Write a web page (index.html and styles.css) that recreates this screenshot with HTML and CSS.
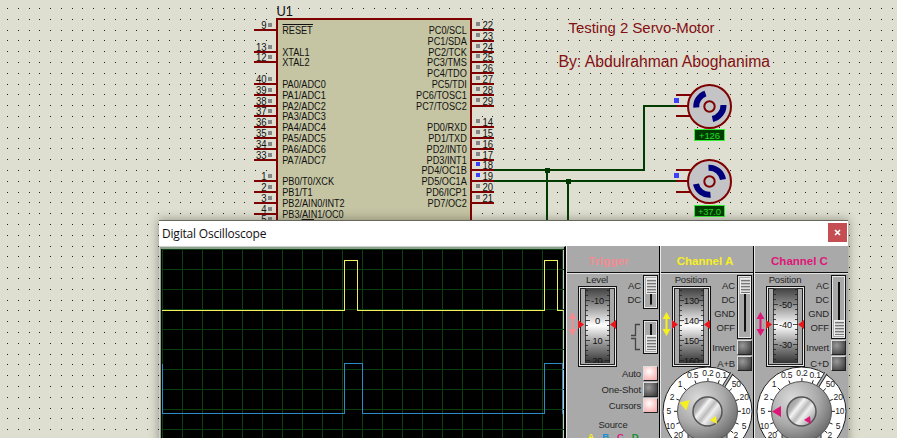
FILE: index.html
```html
<!DOCTYPE html>
<html lang="en">
<head>
<meta charset="utf-8">
<title>Testing 2 Servo-Motor</title>
<link rel="stylesheet" href="styles.css">
</head>
<body>
<main class="workspace">
  <svg class="schematic" width="897" height="438" viewBox="0 0 897 438">
    <path id="dots" class="dots"/>
    <rect class="chip" x="277" y="19" width="194" height="230"/>
    <text class="ref" x="276.500" y="16" textLength="16.500" lengthAdjust="spacingAndGlyphs">U1</text>
    <g id="pins"></g>
    <path class="overline" d="M282.500 24.500H313M301.500 219.500H314"/>
    <path class="wire" d="M494 170H644V106H676M494 181H676M547 170V240M568 181V240"/>
    <path class="joint" d="M545 168h5v5h-5zM566 179h5v5h-5z"/>
    <text class="note" x="568.500" y="33" textLength="146" lengthAdjust="spacingAndGlyphs">Testing 2 Servo-Motor</text>
    <text class="note big" x="558.500" y="67" textLength="211.500" lengthAdjust="spacingAndGlyphs">By: Abdulrahman Aboghanima</text>
    <g transform="translate(709.500 106.500)">
      <path class="lead" d="M-34-11.500h18M-34-.5h18M-34 9.500h18"/>
      <rect class="hi" x="-35.500" y="-8.500" width="5" height="5"/>
      <circle class="hub" r="21.500"/>
      <path class="blade" d="M-13.200 1A13.500 13.500 0 0 1-4-13M14-1.500A14 14 0 0 1 3 12.500"/>
      <circle class="hub" r="5.200"/>
      <rect class="tag" x="-15" y="23" width="30" height="11"/>
      <text class="tagtext" x="0" y="32" textLength="21">+126</text>
    </g>
    <g transform="translate(709.500 181.500)">
      <path class="lead" d="M-34-11.500h18M-34-.5h18M-34 10.500h18"/>
      <rect class="hi" x="-35.500" y="-8.500" width="5" height="5"/>
      <circle class="hub" r="21.500"/>
      <path class="blade" d="M-1-13.800A14 14 0 0 1 13.500-2M-13.500 2.500A13.500 13.500 0 0 0 1 13.300"/>
      <circle class="hub" r="5.200"/>
      <rect class="tag" x="-15" y="24" width="30" height="11"/>
      <text class="tagtext" x="0" y="33" textLength="23">+37.0</text>
    </g>
  </svg>

  <section class="window">
    <header class="titlebar"><span>Digital Oscilloscope</span><button class="close" aria-label="Close"><svg width="7" height="7" viewBox="0 0 7 7"><path d="M1 1l5 5M6 1L1 6"/></svg></button></header>
    <div class="body">
      <div class="screen">
        <svg width="402" height="190" viewBox="0 0 402 190">
          <defs><pattern id="grid" width="20" height="20" patternUnits="userSpaceOnUse"><path d="M0 .5H20M.5 0V20" stroke="#0b3f10"/></pattern></defs>
          <rect width="402" height="190" fill="url(#grid)"/>
          <path class="trace-b" d="M.5 114.500V164.500H182.500V114.500H200.500V164.500H382.500V114.500H400.500V164.500"/>
          <path class="trace-a" d="M0 61.500H182.500V11.500H195.500V61.500H382.500V11.500H395.500V61.500H401"/>
        </svg>
      </div>
      <section class="panel trigger">
        <h2>Trigger</h2>
        <div class="face">
          <div class="gauge"><span>Level</span><svg data-values="-10,0,10,20" data-first="15" width="52" height="82"></svg></div>
          <div class="options">
            <div class="choice"><ul><li>AC</li><li>DC</li></ul><i class="switch"></i></div>
            <div class="choice slope"><svg width="10" height="28" viewBox="0 0 10 28"><path d="M0 12.500H4.500V1.500H9M0 15.500H4.500V26.500H9"/></svg><i class="switch down"></i></div>
          </div>
        </div>
        <div class="buttons">
          <div class="row">Auto<i class="btn lit"></i></div>
          <div class="row">One-Shot<i class="btn"></i></div>
          <div class="row">Cursors<i class="btn lit"></i></div>
        </div>
        <div class="source">Source</div>
        <div class="sources"><b class="a">A</b><b class="b">B</b><b class="c">C</b><b class="d">D</b></div>
      </section>
      <section class="panel chan-a">
        <h2>Channel A</h2>
        <div class="face">
          <div class="gauge"><span>Position</span><svg data-values="130,140,150,160" data-first="15" width="52" height="82"></svg></div>
          <div class="options">
            <div class="choice long"><ul><li>AC</li><li>DC</li><li>GND</li><li>OFF</li></ul><i class="switch"></i></div>
            <div class="row">Invert<i class="btn"></i></div>
            <div class="row">A+B<i class="btn"></i></div>
          </div>
        </div>
        <svg class="knob" data-angle="18" width="92" height="80" viewBox="0 0 92 80"></svg>
      </section>
      <section class="panel chan-c">
        <h2>Channel C</h2>
        <div class="face">
          <div class="gauge"><span>Position</span><svg data-values="-50,-40,-30" data-first="19" width="52" height="82"></svg></div>
          <div class="options">
            <div class="choice long"><ul><li>AC</li><li>DC</li><li>GND</li><li>OFF</li></ul><i class="switch down"></i></div>
            <div class="row">Invert<i class="btn"></i></div>
            <div class="row">C+D<i class="btn"></i></div>
          </div>
        </div>
        <svg class="knob" data-angle="0" width="92" height="80" viewBox="0 0 92 80"></svg>
      </section>
    </div>
  </section>
</main>
<svg class="defs" width="0" height="0">
  <defs>
    <linearGradient id="drum" x2="0" y2="1"><stop offset="0" stop-color="#404040"/><stop offset=".2" stop-color="#858585"/><stop offset=".5" stop-color="#fff"/><stop offset=".75" stop-color="#929292"/><stop offset="1" stop-color="#333"/></linearGradient>
    <radialGradient id="dialfill" cx=".35" cy=".3" r=".8"><stop offset="0" stop-color="#dcdcdc"/><stop offset=".55" stop-color="#a8a8a8"/><stop offset="1" stop-color="#606060"/></radialGradient>
    <linearGradient id="capfill" x1="0" y1="0" x2="1" y2=".8"><stop offset="0" stop-color="#888"/><stop offset=".3" stop-color="#b4b4b4"/><stop offset=".4" stop-color="#f4f4f4"/><stop offset=".55" stop-color="#bcbcbc"/><stop offset=".66" stop-color="#efefef"/><stop offset="1" stop-color="#909090"/></linearGradient>
  </defs>
</svg>
<script src="app.js"></script>
</body>
</html>
```
FILE: styles.css
```css
* { box-sizing: border-box; }
body { margin: 0; overflow: hidden; font-family: "Liberation Sans", Arial, sans-serif; }
.workspace { position: relative; width: 897px; height: 438px; overflow: hidden; background: #dedfd0; }
.schematic { display: block; }
.defs { position: absolute; }
.dots { fill: #202020; shape-rendering: crispEdges; }
.chip { fill: #c5c4a3; stroke: #7e0000; stroke-width: 2; }
.pin, .lead { stroke: #7e0000; stroke-width: 2; fill: none; shape-rendering: crispEdges; }
.label, .num { font-size: 10px; fill: #101010; }
.ref { font-size: 14.500px; fill: #101010; }
.overline { stroke: #111; stroke-width: 1; }
.lo { fill: #858585; }
.hi { fill: #3c40f8; }
.wire { fill: none; stroke: #003c00; stroke-width: 2; shape-rendering: crispEdges; }
.joint { fill: #003800; }
.note { font-size: 15px; fill: #851014; }
.note.big { font-size: 16px; }
.hub { fill: #c4c4c6; stroke: #7e0000; stroke-width: 2; }
.blade { fill: none; stroke: #00007c; stroke-width: 6; }
.tag { fill: #003c00; stroke: #35ee35; stroke-width: 1; }
.tagtext { font-size: 9.500px; fill: #22e022; text-anchor: middle; }

.window { position: absolute; left: 159px; top: 220px; width: 689px; height: 240px; border-top: 1px solid #68685f; background: #a9a9a9; box-shadow: 0 0 9px 1px rgba(50, 50, 40, .38); }
.titlebar { display: flex; align-items: center; justify-content: space-between; height: 25px; padding: 0 1px 0 3px; background: #fff; font: 12px "Open Sans", "Noto Sans", sans-serif; color: #111; letter-spacing: -.2px; }
.close { display: grid; place-items: center; width: 19px; height: 19px; margin-top: -2px; padding: 0; border: 0; background: #c44e52; }
.close path { stroke: #fff; stroke-width: 1.700; }
.body { display: flex; height: 214px; }
.screen { width: 407px; padding: 2px 0 0 2px; border: 1px solid #cfcfcf; border-right: 2px solid #000; background: #000; box-shadow: inset 1px 2px 0 #8ba18b, inset -1px 0 0 #cbcbc5; }
.screen svg { display: block; }
.screen path { fill: none; shape-rendering: crispEdges; }
.trace-a { stroke: #f2ef5c; }
.trace-b { stroke: #2c8ac4; }

.panel { flex: 0 0 94px; height: 214px; border-left: 1px solid #e9e9e9; border-right: 1px solid #000; background: #a9a9a9; color: #262626; font-size: 9.500px; line-height: 11px; letter-spacing: -.15px; overflow: hidden; }
.chan-c { border-right: 0; }
.trigger { --c: #f38b92; }
.chan-a { --c: #f7f020; }
.chan-c { --c: #de1678; }
.panel h2 { display: flex; align-items: center; justify-content: center; height: 28px; margin: 0 0 0 -1px; padding: 3px 3px 0 0; border-bottom: 1px solid #e2e2e2; box-shadow: inset 0 -1px 0 #111; color: var(--c); font-size: 11.500px; letter-spacing: 0; }
.trigger h2 { padding-right: 8px; letter-spacing: .2px; }
.face { display: flex; height: 92px; }
.gauge { width: 52px; text-align: center; }
.gauge span { display: block; height: 11px; padding-left: 8px; }
.gauge svg { display: block; }
.gauge text { font-size: 9.500px; fill: #111; text-anchor: middle; }
.options { display: flex; flex-direction: column; width: 39px; padding-top: 1px; }
.choice { display: flex; flex: none; justify-content: flex-end; gap: 2px; height: 34px; margin-bottom: 11px; }
.choice.long { height: 65px; margin-bottom: 0; }
ul { margin: 0; padding: 4px 0 0; list-style: none; text-align: right; line-height: 14px; }
.slope svg { margin-top: 3px; fill: none; stroke: #444; stroke-width: 1.300; }
.switch { display: flex; flex-direction: column; width: 15px; height: 100%; padding: 2px; border: 1px solid #111; background: linear-gradient(#111, #111) center / 2px 80% no-repeat, #a9a9a9; box-shadow: inset 0 0 0 1px #e6e6e6; }
.long .switch { height: 64px; }
.switch::before { content: ""; width: 9px; height: 14px; border: 1px solid #eee; background: repeating-linear-gradient(#ddd 0 1px, #777 1px 2px, #bcbcbc 2px 3px); }
.switch.down { justify-content: flex-end; }
.row { display: flex; flex: none; align-items: center; justify-content: flex-end; gap: 2px; height: 15px; margin-bottom: 1px; white-space: nowrap; }
.btn { flex: none; width: 15px; height: 15px; border: 1px solid; border-color: #ddd #222 #222 #ddd; background: radial-gradient(circle at 35% 35%, #999, #333); }
.btn.lit { background: radial-gradient(circle at 40% 35%, #fff, #fbc4c4 60%, #eaa); }
.buttons { width: 91px; }
.source { padding: 5px 0 0; text-align: center; }
.sources { display: flex; justify-content: center; gap: 8px; margin-top: 1px; font-size: 9.500px; }
.a { color: #f5ee20; } .b { color: #1590d0; } .c { color: #de1678; } .d { color: #159030; }
.knob { display: block; }
.options .row:last-child { position: relative; z-index: 1; }
.knob text { font-size: 8.500px; fill: #222; text-anchor: middle; }
```
FILE: app.js
```js
const NS = 'http://www.w3.org/2000/svg';
function add(parent, tag, attrs, text) {
  const el = document.createElementNS(NS, tag);
  for (const k in attrs) el.setAttribute(k, attrs[k]);
  if (text !== undefined) el.textContent = text;
  parent.appendChild(el);
  return el;
}

// Placement grid
const pitch = 10.8;
let dots = '';
for (let i = -1; i < 83; i++) {
  for (let j = 0; j < 41; j++) {
    dots += `M${Math.round(244.300 + (i - 22) * 10.790)} ${Math.round(8 + j * pitch)}h1v1h-1z`;
  }
}
document.getElementById('dots').setAttribute('d', dots);

// Microcontroller pins: [row, number, name]
const left = [[0, 9, 'RESET'], [2, 13, 'XTAL1'], [3, 12, 'XTAL2'], [5, 40, 'PA0/ADC0'], [6, 39, 'PA1/ADC1'],
  [7, 38, 'PA2/ADC2'], [8, 37, 'PA3/ADC3'], [9, 36, 'PA4/ADC4'], [10, 35, 'PA5/ADC5'], [11, 34, 'PA6/ADC6'],
  [12, 33, 'PA7/ADC7'], [14, 1, 'PB0/T0/XCK'], [15, 2, 'PB1/T1'], [16, 3, 'PB2/AIN0/INT2'], [17, 4, 'PB3/AIN1/OC0'], [18, 5, '']];
const right = [[0, 22, 'PC0/SCL'], [1, 23, 'PC1/SDA'], [2, 24, 'PC2/TCK'], [3, 25, 'PC3/TMS'], [4, 26, 'PC4/TDO'],
  [5, 27, 'PC5/TDI'], [6, 28, 'PC6/TOSC1'], [7, 29, 'PC7/TOSC2'], [9, 14, 'PD0/RXD'], [10, 15, 'PD1/TXD'],
  [11, 16, 'PD2/INT0'], [12, 17, 'PD3/INT1'], [13, 18, 'PD4/OC1B'], [14, 19, 'PD5/OC1A'], [15, 20, 'PD6/ICP1'], [16, 21, 'PD7/OC2']];
const pins = document.getElementById('pins');
function narrow(el, f) {
  el.setAttribute('textLength', (el.getComputedTextLength() * f).toFixed(1));
  el.setAttribute('lengthAdjust', 'spacingAndGlyphs');
}
function drawPins(list, onRight) {
  for (const [row, num, name] of list) {
    const y = Math.round(30 + row * pitch);
    add(pins, 'path', { class: 'pin', d: onRight ? `M472 ${y}H494` : `M254 ${y}H277` });
    const high = num === 18 || num === 19;
    add(pins, 'rect', { class: high ? 'hi' : 'lo', x: onRight ? 476 : 268, y: y - (onRight ? 8 : 7), width: 4, height: 4 });
    narrow(add(pins, 'text', { class: 'num', x: onRight ? 482.5 : 266.5, y: y - 1, 'text-anchor': onRight ? 'start' : 'end' }, num), .95);
    if (name) narrow(add(pins, 'text', { class: 'label', x: onRight ? 466.8 : 282.2, y: y + 4, 'text-anchor': onRight ? 'end' : 'start' }, name), .915);
  }
}
drawPins(left, false);
drawPins(right, true);

// Rotary drums
document.querySelectorAll('.gauge svg').forEach(svg => {
  add(svg, 'rect', { x: 11.5, y: 1.5, width: 38, height: 80, fill: '#a9a9a9', stroke: '#111' });
  add(svg, 'rect', { x: 12.5, y: 2.5, width: 36, height: 78, fill: 'none', stroke: '#e8e8e8' });
  add(svg, 'rect', { x: 13.5, y: 3.5, width: 34, height: 76, fill: 'none', stroke: '#222' });
  const drum = add(svg, 'svg', { x: 18, y: 3, width: 25, height: 75 });
  add(drum, 'rect', { width: 25, height: 75, fill: 'url(#drum)' });
  let ticks = 'M.5 0V75M24.500 0V75';
  const first = +svg.dataset.first - 3;
  for (let y = first % 5; y < 75; y += 5) {
    const len = (y - first) % 20 === 0 ? 5 : 3;
    ticks += `M0 ${y + .5}h${len}M25 ${y + .5}h-${len}`;
  }
  add(drum, 'path', { d: ticks, stroke: '#222', 'stroke-width': .8 });
  svg.dataset.values.split(',').forEach((v, i) => {
    const t = add(drum, 'text', { x: 12.5, y: first + i * 20 + 3.5 }, v);
    if (v.length > 1) narrow(t, .97);
  });
  add(svg, 'path', { d: 'M11 35l6 4.500-6 4.500zM49 35l-6 4.500 6 4.500z', fill: '#e8161a' });
  add(svg, 'path', { d: 'M5.500 27l4 7h-3v10h3l-4 7-4-7h3v-10h-3z', fill: 'var(--c)' });
});

// Gain knobs
const marks = [['0.2', 47, 6.5], ['0.5', 31.7, 9.3], ['1', 19, 18], ['2', 11, 31.3], ['5', 7.7, 45.3], ['10', 9.3, 60.3], ['20', 17.3, 69],
  ['0.1', 60.2, 9.3], ['50', 75.3, 18.3], ['20', 83.2, 31.3], ['10', 84.8, 45.3], ['5', 83, 60.3], ['2', 74.7, 69]];
document.querySelectorAll('.knob').forEach(svg => {
  const cx = 46.5, cy = 45.5;
  add(svg, 'circle', { cx, cy, r: 44.5, fill: '#fff', stroke: '#222' });
  add(svg, 'path', { d: 'M27 80V68H66V80', fill: '#999', stroke: '#333' });
  add(svg, 'path', { d: 'M71 7L61 23', stroke: '#222', 'stroke-width': 3.4 });
  add(svg, 'path', { d: 'M71.500 6L61 23', stroke: '#b5b5b5', 'stroke-width': 1.6 });
  let d = '';
  marks.forEach(([t, x, y]) => {
    const a = Math.atan2(y - cy, x - cx);
    d += `M${cx + 29 * Math.cos(a)} ${cy + 29 * Math.sin(a)}L${cx + 33.5 * Math.cos(a)} ${cy + 33.5 * Math.sin(a)}`;
    add(svg, 'text', { x, y: y + 3 }, t);
  });
  add(svg, 'path', { d, stroke: '#222' });
  add(svg, 'circle', { cx, cy, r: 30, fill: 'url(#dialfill)', stroke: '#555' });
  add(svg, 'circle', { cx, cy, r: 14.5, fill: 'url(#capfill)', stroke: '#555', 'stroke-width': 1.5 });
  add(svg, 'path', { d: 'M17 45.500l9-5.500v11z', fill: 'var(--c)', transform: `rotate(${svg.dataset.angle} ${cx} ${cy})` });
  add(svg, 'path', { d: 'M49 54l6-4 1 8z', fill: 'var(--c)' });
});
```
